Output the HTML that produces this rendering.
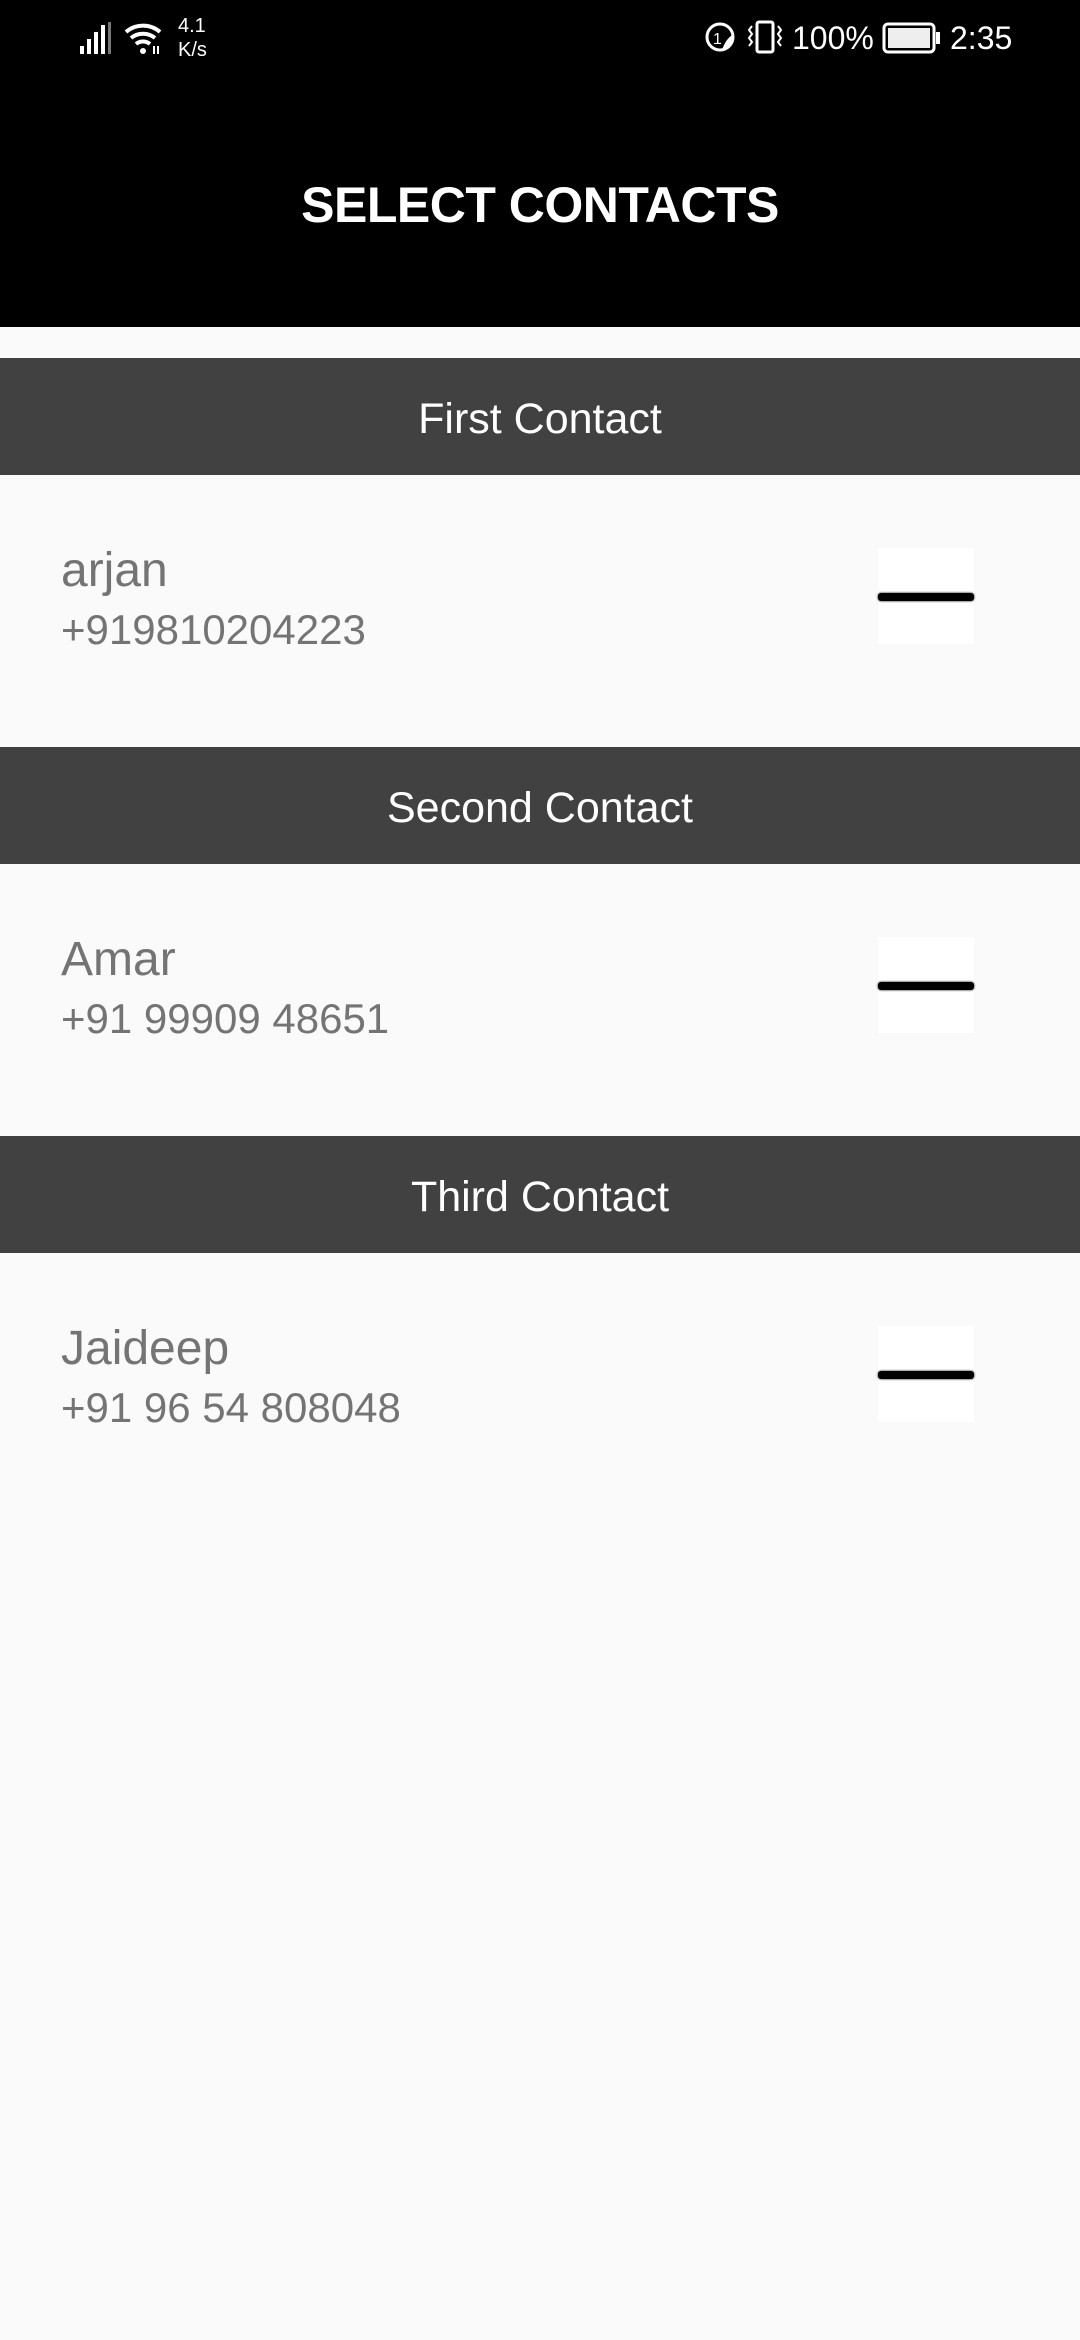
<!DOCTYPE html>
<html><head><meta charset="utf-8"><style>
*{margin:0;padding:0;box-sizing:border-box}
body{width:1080px;height:2340px;background:#fafafa;font-family:"Liberation Sans",sans-serif;position:relative;overflow:hidden}
.hdr{position:absolute;left:0;top:0;width:1080px;height:327px;background:#000}
.title{position:absolute;left:0;width:1080px;top:180px;text-align:center;color:#fff;font-weight:bold;font-size:50px;line-height:50px;letter-spacing:-0.5px}
.st{position:absolute;color:#fff;font-size:32px;line-height:32px}
.sec{position:absolute;left:0;width:1080px}
.bar{position:absolute;left:0;top:0;width:1080px;height:117px;background:#414141;color:#fff;font-size:43px;line-height:43px;text-align:center;padding-top:40px}
.name{position:absolute;left:61px;top:189px;font-size:48px;line-height:48px;color:#747474}
.ph{position:absolute;left:61px;top:251px;font-size:42px;line-height:42px;color:#747474}
.btn{position:absolute;left:878px;top:190px;width:96px;height:96px;background:#fff}
.btn i{position:absolute;left:0;top:45px;width:96px;height:8px;background:#000;border-radius:3px;box-shadow:0 0 2px #000}
</style></head><body>
<div class="hdr"></div>
<div class="st" style="left:80px;top:22px">
<svg width="36" height="32" viewBox="0 0 36 32"><rect x="0" y="24" width="4" height="8" fill="#fff"/><rect x="7" y="17" width="4" height="15" fill="#fff"/><rect x="14" y="10" width="4" height="22" fill="#fff"/><rect x="21" y="3" width="4" height="29" fill="#fff"/><rect x="28" y="0" width="3" height="32" fill="#777"/></svg>
</div>
<svg style="position:absolute;left:124px;top:22px" width="40" height="32" viewBox="0 0 40 32"><path d="M2 10 A26 26 0 0 1 36 10 M7 16 A19 19 0 0 1 31 16 M12 22 A11 11 0 0 1 26 22" stroke="#fff" stroke-width="4" fill="none"/><circle cx="19" cy="29" r="3" fill="#fff"/><path d="M30 24v8M34 24v8" stroke="#fff" stroke-width="2"/></svg>
<div class="st" style="left:178px;top:14px;font-size:20px;line-height:24px">4.1<br>K/s</div>
<svg style="position:absolute;left:704px;top:20px" width="34" height="34" viewBox="0 0 34 34"><circle cx="16" cy="17" r="13" stroke="#fff" stroke-width="3" fill="none"/><text x="9" y="24" font-size="16" fill="#fff" font-family="Liberation Sans">1</text><path d="M18 30 Q30 26 30 14 Q22 18 18 30Z" fill="#fff"/></svg>
<svg style="position:absolute;left:746px;top:20px" width="40" height="34" viewBox="0 0 40 34"><rect x="11" y="2" width="16" height="30" rx="2" stroke="#fff" stroke-width="3" fill="none"/><path d="M6 6 l-3 4 3 4 -3 4 3 4 -3 4 M32 6 l3 4 -3 4 3 4 -3 4 3 4" stroke="#fff" stroke-width="2" fill="none"/></svg>
<div class="st" style="left:792px;top:22px">100%</div>
<svg style="position:absolute;left:882px;top:22px" width="60" height="32" viewBox="0 0 60 32"><rect x="2" y="2" width="50" height="28" rx="4" stroke="#fff" stroke-width="3" fill="none"/><rect x="6" y="6" width="42" height="20" fill="#eee"/><rect x="54" y="10" width="4" height="12" fill="#fff"/></svg>
<div class="st" style="left:950px;top:22px">2:35</div>
<div class="title">SELECT CONTACTS</div>

<div class="sec" style="top:358px"><div class="bar">First Contact</div><div class="name">arjan</div><div class="ph">+919810204223</div><div class="btn"><i></i></div></div>
<div class="sec" style="top:747px"><div class="bar">Second Contact</div><div class="name">Amar</div><div class="ph">+91 99909 48651</div><div class="btn"><i></i></div></div>
<div class="sec" style="top:1136px"><div class="bar">Third Contact</div><div class="name">Jaideep</div><div class="ph">+91 96 54 808048</div><div class="btn"><i></i></div></div>
</body></html>
